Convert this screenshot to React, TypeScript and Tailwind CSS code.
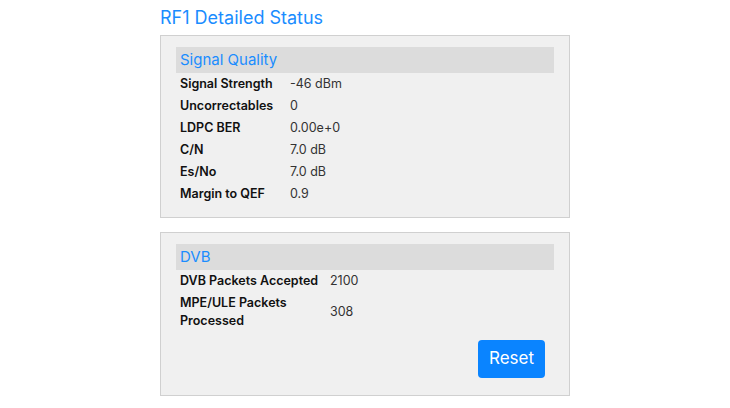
const signalRows = [
  ['Signal Strength', '-46 dBm'],
  ['Uncorrectables', '0'],
  ['LDPC BER', '0.00e+0'],
  ['C/N', '7.0 dB'],
  ['Es/No', '7.0 dB'],
  ['Margin to QEF', '0.9'],
];

const dvbRows = [
  ['DVB Packets Accepted', '2100'],
  ['MPE/ULE Packets Processed', '308'],
];

function Section({
  title,
  rows,
  labelWidth,
  children,
}: {
  title: string;
  rows: string[][];
  labelWidth: string;
  children?: React.ReactNode;
}) {
  return (
    <section className="border border-[#d0d0d0] bg-[#f0f0f0] px-[15px] pt-[11px] pb-[12px]">
      <h2 className="bg-[#dcdcdc] h-[26px] flex items-center px-[4px] text-[15px] text-[#1a8cff]">{title}</h2>
      <table className="border-collapse">
        <tbody>
          {rows.map(([label, value]) => (
            <tr key={label}>
              <th className={`${labelWidth} text-left align-middle font-semibold text-[12.5px] leading-[18px] text-[#111] py-[2px] pl-[4px] pr-[10px]`}>
                {label}
              </th>
              <td className="text-[12.5px] leading-[18px] text-[#333] py-[2px] align-middle">{value}</td>
            </tr>
          ))}
        </tbody>
      </table>
      {children}
    </section>
  );
}

export default function App() {
  return (
    <div className="min-h-[408px] bg-white font-['Inter',sans-serif]">
      <div className="w-[410px] mx-auto pt-[6px] flex flex-col">
        <h1 className="text-[18px] leading-[24px] text-[#1a8cff] mb-[5px]">RF1 Detailed Status</h1>
        <Section title="Signal Quality" rows={signalRows} labelWidth="w-[114px]" />
        <div className="h-[14px]" />
        <Section title="DVB" rows={dvbRows} labelWidth="w-[154px]">
          <div className="flex justify-end pr-[9px] mt-[8px] mb-[5px]">
            <button className="bg-[#0a84ff] text-white text-[17px] rounded-[4px] w-[67px] h-[38px]">Reset</button>
          </div>
        </Section>
      </div>
    </div>
  );
}
